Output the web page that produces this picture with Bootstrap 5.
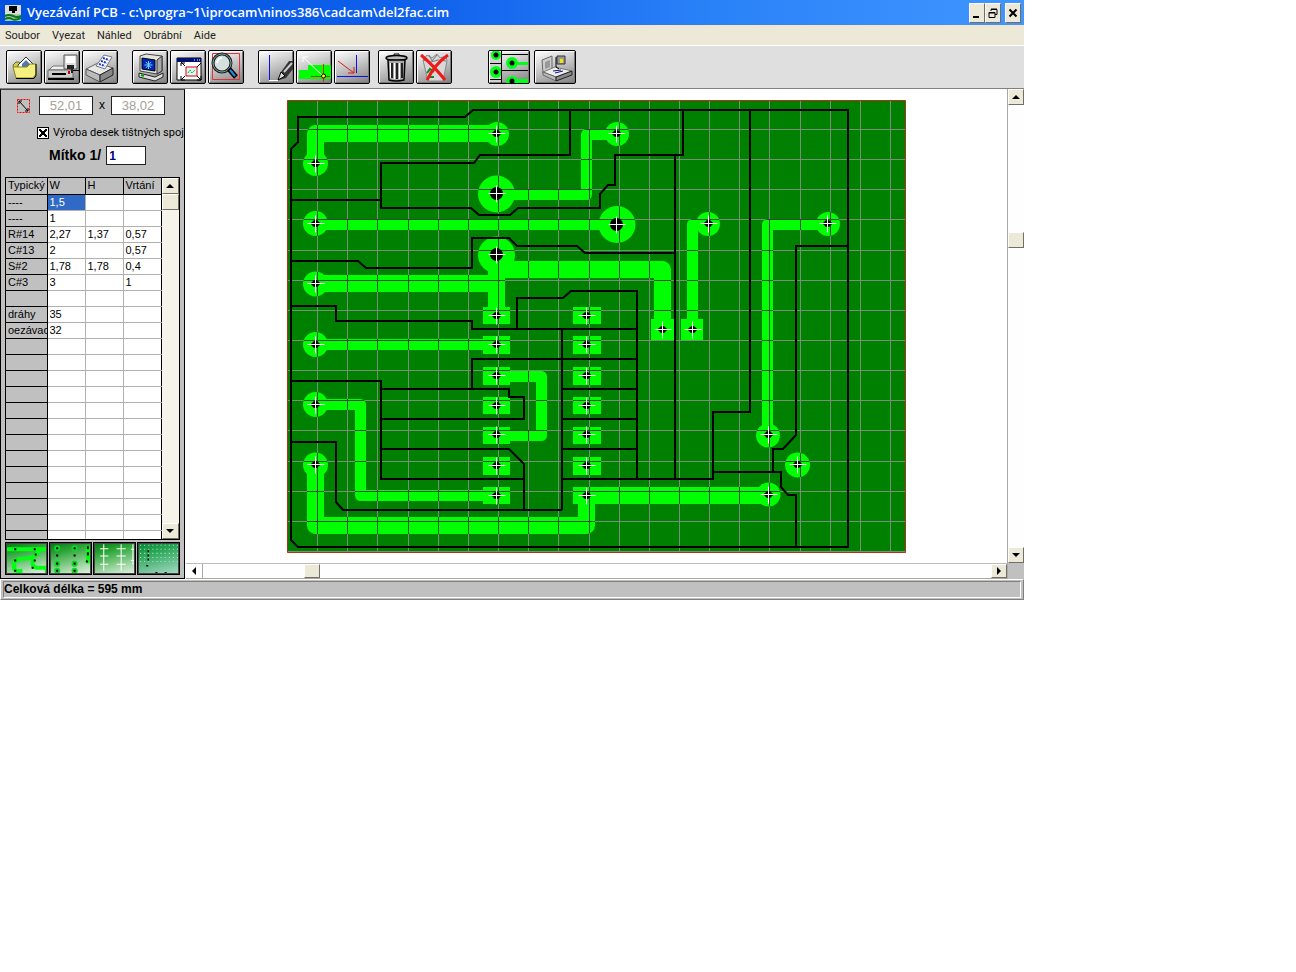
<!DOCTYPE html>
<html lang="cs">
<head>
<meta charset="utf-8">
<meta name="viewport" content="width=device-width, initial-scale=1">
<title>Vyezávání PCB</title>
<link href="https://cdn.jsdelivr.net/npm/bootstrap@5.3.0/dist/css/bootstrap.min.css" rel="stylesheet">
<style>
body{background:#fff;color:#000;font:11px/15px "Liberation Sans",Arial,sans-serif}
svg{display:block}
.app{max-width:1024px;background:#c0c0c0}
.titlebar{height:25px;background:linear-gradient(90deg,#0050e0,#0f60ec 40%,#2a82f8 70%,#4096ff);color:#fff;padding:0 3px 0 5px}
.titlebar h1{font:600 13px/25px "Open Sans","Noto Sans",sans-serif;margin:0;padding-left:2px}
.face{background:#ece9d8;border:1px solid;border-color:#fff #716f64 #716f64 #fff;border-radius:0;padding:0;color:#000;display:flex;align-items:center;justify-content:center;flex:none}
.winbtn{width:16px;height:20px}
.menubar{height:21px;background:linear-gradient(#f6e4cc,#ece9d8 4px);padding:0 5px;gap:12px;border-bottom:1px solid #fff}
.menubar a{color:#222;text-decoration:none;font:11px/21px Roboto,sans-serif}
.toolbar{background:#dfdfdf;padding:4px 6px;border-bottom:1px solid #808080;gap:14px}
.group{display:flex;gap:2px}
.group.near{margin-left:-6px}
.group.far{margin-left:22px;gap:4px}
.tool{width:36px;height:34px;padding:0;border:1px solid #000;border-radius:2px;background:linear-gradient(160deg,#fff,#c8c8c8 45%,#808080);box-shadow:inset 1px 1px #fff,inset -1px -1px #777;overflow:hidden}
.tool.wide{width:42px}
.tool svg,.thumbbtn svg{width:100%;height:100%}
.side{width:185px;flex:none;border:1px solid #000;padding:0 4px 3px;border-top-color:#444}
.sizerow{padding:6px 0 0 10px}
.tickrow{padding:10px 0 0 32px;gap:4px;white-space:nowrap}
.tickrow label{font-family:Roboto,sans-serif}
.scalerow{padding:6px 0 12px 44px;gap:5px}
.field{background:#fff;border:1px solid #000;border-color:#444 #fff #fff #444;outline:1px solid #222;outline-offset:-1px;border-radius:0;padding:0 4px}
.dim{width:54px;height:19px;text-align:center;font:13px/17px "Liberation Sans",sans-serif;color:#a5a295}
.times{width:18px;text-align:center;font-size:12px}
.scalebox{width:40px;height:19px;color:#000080;font:bold 12px/17px "Liberation Sans",sans-serif;padding:0 2px}
.scalelabel{font:bold 14px/19px "Liberation Sans",sans-serif}
.tick{appearance:none;width:12px;height:12px;margin:0;border:1px solid #000;background:#fff;background-image:linear-gradient(45deg,transparent 40%,#000 40%,#000 60%,transparent 60%),linear-gradient(-45deg,transparent 40%,#000 40%,#000 60%,transparent 60%);background-size:8px 8px;background-position:center;background-repeat:no-repeat}
.gridbox{border:1px solid #000;background:#fff}
.gridbox table{table-layout:fixed;border-collapse:collapse;width:155px;line-height:15px}
.gridbox col{width:38px}
.gridbox col:first-child{width:41px}
.gridbox th,.gridbox td{height:16px;padding:0 0 0 2px;font-weight:400;overflow:hidden;white-space:nowrap;border-right:1px solid #b0b0b0;border-bottom:1px solid #b0b0b0}
.gridbox th{background:#c0c0c0;border-color:#000}
.gridbox td:last-child{border-right-color:#000}
.gridbox tr.cut th,.gridbox tr.cut td{height:9px;border-bottom:0}
.gridbox td.picked{background:#316ac5;color:#fff}
.vbar{width:17px;flex:none;display:flex;flex-direction:column;background:#fefefe}
.dither{background:#f5f3ea}
.arrow{width:16px;height:16px}
.vbar .face{width:100%}
.hbar{height:16px;display:flex;border-top:1px solid #bbb;background:#fefefe;border-bottom:1px solid #aca899}
.hbar .arrow{height:14px}
.hbar .lead-gap{width:12.4%;border-left:1px solid #aaa}
.corner{height:16px;background:#c0c0c0}
.main-v{border-left:1px solid #aaa}
.main-v .lead-gap{height:26%}
.canvas{padding-left:1px}
.board{width:100%;max-width:619px;margin:11px auto 10px}
.thumbs{padding-top:2px;gap:1px}
.thumbbtn{flex:1;height:33px;padding:0;border:1px solid #000;outline:1px solid #444;outline-offset:-2px;background:linear-gradient(165deg,#007a10,#2ea83a 30%,#e8f4e8);overflow:hidden}
.status{height:21px;border:1px solid #808080;border-top-color:#fff;border-left-color:#fff;padding:1px 2px}
.status p{font:bold 12px/15px "Liberation Sans",sans-serif;margin:0;border:1px solid #808080;border-right-color:#fff;border-bottom-color:#fff;height:17px}
</style>
</head>
<body>
<div class="app">
  <header class="titlebar d-flex align-items-center">
    <svg width="16" height="16" viewBox="0 0 16 16" class="me-1"><path d="M0 0h16v16H0z" fill="#ddd"/><path d="M4 1h8v5H4zM7 6h3v2H7z"/><path d="M0 9h16v7H0z" fill="#a9c9a9"/><path d="M0 11q4-2 8 0t8 0M0 14q4-2 7 0t9-1" stroke="#087818" stroke-width="2" fill="none"/></svg>
    <h1 class="flex-grow-1 text-nowrap">Vyezávání PCB - c:\progra~1\iprocam\ninos386\cadcam\del2fac.cim</h1>
    <button class="face winbtn" aria-label="Minimalizovat"><svg width="14" height="16"><path d="M3 11h6v2H3z"/></svg></button>
    <button class="face winbtn" aria-label="Obnovit"><svg width="14" height="16" fill="none" stroke="#000"><path d="M5 6V4.500h6v5H9M5 4h6M3 7.500h6v5H3zM3 8h6"/></svg></button>
    <button class="face winbtn ms-1" aria-label="Zavřít"><svg width="14" height="16"><path d="M3.500 4.500l7 7m0-7l-7 7" stroke="#000" stroke-width="2"/></svg></button>
  </header>
  <nav class="menubar d-flex"><a href="#">Soubor</a><a href="#">Vyezat</a><a href="#">Náhled</a><a href="#">Obrábní</a><a href="#">Aide</a></nav>

  <div class="toolbar d-flex">
    <div class="group">
      <button class="tool" aria-label="Otevřít"><svg viewBox="0 0 34 32"><path d="M6 14l3-3h3l2 3h14v12H9z" fill="#d0d040" stroke="#666"/><path d="M11 14l8-8 8 8v6H11z" fill="#fff" stroke="#333"/><path d="M15 13l4-4 5 5v3h-9z" fill="#5878a8"/><path d="M6 16h14l3-3h6v10l-3 4H9z" fill="#f4f080" stroke="#888820"/><path d="M9 27.500h18l2-3V13" fill="none" stroke="#000"/></svg></button>
      <button class="tool" aria-label="Uložit"><svg viewBox="0 0 34 32"><path d="M4 19l4-4h14l6 4z" fill="#eee" stroke="#777"/><path d="M3 19h25v8H3z" fill="#ccc" stroke="#666"/><path d="M3 28h26M7 23h14" stroke="#000" stroke-width="2"/><path d="M19 4h13v14H19z" fill="#ddd" stroke="#555"/><path d="M21 5h9v7h-9z" fill="#fff"/><path d="M22 14h7v4h-7zM26 18h2v4h-2z" fill="#222"/><path d="M23 20h2v3h-2z" fill="#c00"/><path d="M28 19.500h6" stroke="#000"/></svg></button>
      <button class="tool" aria-label="Tisk"><svg viewBox="0 0 34 32"><path d="M3 18l12-6 15 5-13 7z" fill="#e8e8e8" stroke="#666"/><path d="M3 18l14 6v7L3 24z" fill="#bbb" stroke="#555"/><path d="M17 24l13-7v7l-13 7z" fill="#888" stroke="#222"/><path d="M13 15l8-11 8 2-7 12z" fill="#fff" stroke="#777"/><path d="M20 7l6 2m-8 1l6 2m-8 1l6 2" stroke="#1530d0" stroke-width="2" stroke-dasharray="2 1"/></svg></button>
    </div>
    <div class="group">
      <button class="tool" aria-label="Počítač"><svg viewBox="0 0 34 32"><path d="M7 5l6-2 16 2v15l-5 3-17-3z" fill="#e4e4dc" stroke="#444"/><path d="M9 7l13 2v11L9 18z" fill="#0028b8" stroke="#000"/><path d="M13 11l5 6m0-6l-5 6m2.500-7v8m-4-4h8" stroke="#70d0ff"/><path d="M24 9l5-4v15l-5 3z" fill="#aaa" stroke="#333"/><path d="M6 22l16 4 8-4v4l-8 4-16-4z" fill="#ddd" stroke="#222"/><path d="M8 24l3 1" stroke="#0a0" stroke-width="2"/></svg></button>
      <button class="tool" aria-label="Celé okno"><svg viewBox="0 0 34 32"><path d="M6 7h24v22H6z" fill="#fff" stroke="#000"/><path d="M6 7h24v4H6z" fill="#001070"/><path d="M23 9h1m2 0h1m1 0h1" stroke="#fff"/><path d="M15 16h11v9H15z" fill="#d7f8f0" stroke="#e00000"/><path d="M17 22l2-3 2 3 3-3" stroke="#0a9a50" stroke-dasharray="2 1" fill="none"/><path d="M14 15l-4-4m16 5l4-4M14 25l-4 4m16-4l4 4M10 15v-3h4M10 25v4h4m12 0h4v-4" stroke="#000" fill="none"/></svg></button>
      <button class="tool" aria-label="Lupa"><svg viewBox="0 0 34 32"><path d="M3.500 2.500h27v26h-27z" fill="none" stroke="#e03038"/><circle cx="13" cy="12" r="9" fill="#d4e0dc" stroke="#222" stroke-width="3"/><circle cx="13" cy="12" r="9" fill="none" stroke="#70a098"/><path d="M8 12q1-5 5-5" stroke="#fff" stroke-width="2" fill="none"/><path d="M20 18l7 8" stroke="#000" stroke-width="5"/><path d="M21 19l5 6" stroke="#1890e8" stroke-width="2"/></svg></button>
    </div>
    <div class="group">
      <button class="tool" aria-label="Kreslit"><svg viewBox="0 0 34 32"><path d="M10.500 4v25" stroke="#1010d8"/><path d="M10 29.500h9" stroke="#fff"/><path d="M20 29l2-8 8-11h4v8l-7 9z" fill="#333"/><path d="M19 29l3-8 4 4z" fill="#ddd" stroke="#000"/><path d="M25 21l8-9" stroke="#ccc" stroke-width="2"/></svg></button>
      <button class="tool" aria-label="Posunout"><svg viewBox="0 0 34 32"><path d="M2 19h9v-5h23v14H2z" fill="#00ff00"/><path d="M6 6l19 18M6 11V6h5" stroke="#fff" fill="none"/><path d="M14 25.500h19M26.500 13v18" stroke="#b04000"/><circle cx="26.500" cy="25" r="2" fill="#ff0" stroke="#000"/></svg></button>
      <button class="tool" aria-label="Kolmo"><svg viewBox="0 0 34 32"><path d="M2 25.500h31M21.500 4v18" stroke="#1010e0"/><path d="M3 10l16 12m0-6v6h-6" stroke="#e01818" fill="none"/></svg></button>
    </div>
    <div class="group near">
      <button class="tool" aria-label="Koš"><svg viewBox="0 0 34 32"><path d="M15 3h5v2h-5z" fill="#fff" stroke="#000"/><ellipse cx="17.500" cy="7" rx="10.500" ry="2.500" fill="#bbb" stroke="#000" stroke-width="1.500"/><path d="M9 9h17l-1 20q-8 2-15 0z" fill="#aaa" stroke="#000" stroke-width="1.500"/><path d="M13 12v15m5-15v16m5-16v15" stroke="#222" stroke-width="2"/><path d="M11.500 12v15m4-15v16m5-16v16" stroke="#fff"/></svg></button>
      <button class="tool" aria-label="Smazat"><svg viewBox="0 0 34 32"><path d="M6 9l4-5 5 3 5-4 3 4 6-2 1 5-4 20H11z" fill="#d8d8d8" stroke="#888"/><path d="M6 9l8 2 7-2 8 1M12 4l3 6 5-6" stroke="#777" fill="none"/><path d="M10 22l3-4 4 3m-6 5h6" stroke="#108820" stroke-width="2" fill="none"/><path d="M4 4q12 10 24 25M31 4Q18 13 10 29" stroke="#f01818" stroke-width="3" fill="none"/></svg></button>
    </div>
    <div class="group far">
      <button class="tool wide" aria-label="Deska"><svg viewBox="0 0 40 32" preserveAspectRatio="none"><path d="M1 1h12v30H1z" fill="#d0d0d0"/><g fill="#00ff18"><circle cx="7" cy="4" r="5"/><circle cx="7" cy="21" r="6"/><circle cx="23" cy="12" r="6"/><circle cx="23" cy="31" r="6"/><path d="M23 11h16v3H23zM23 28h16v4H23z"/></g><path d="M12.500 0v32M1 12.500h11M13 3.500h26M13 19.500h26M1 28.500h12" stroke="#000"/><circle cx="7" cy="4" r="2.500"/><circle cx="7" cy="21" r="2.500"/><circle cx="23" cy="12" r="2.500"/><circle cx="23" cy="30" r="2.500"/></svg></button>
      <button class="tool wide" aria-label="Fréza"><svg viewBox="0 0 40 32"><path d="M7 9l10-4v13l-9 4z" fill="#ccc" stroke="#666"/><path d="M10 11l5-2v7l-5 2z" fill="#999"/><path d="M8 21l12-5 17 4-16 6z" fill="#eee" stroke="#777"/><path d="M8 21l13 5v4L8 24z" fill="#bbb" stroke="#666"/><path d="M21 26l16-6v4l-16 6z" fill="#888" stroke="#222"/><path d="M22 5h8v8h-8z" fill="#999" stroke="#333"/><path d="M25 8h3v4h-3z" fill="#f0e800"/><path d="M21 6v10l3 2" stroke="#000" fill="none"/><path d="M18 20l8-1m-6 3l8-2" stroke="#101080"/></svg></button>
    </div>
  </div>

  <main class="d-flex">
    <aside class="side d-flex flex-column">
      <div class="sizerow d-flex align-items-center">
        <svg width="16" height="16" viewBox="0 0 16 16" class="me-1 flex-shrink-0"><path d="M2.500 1.500h12v13h-12z" fill="none" stroke="#ff0000" stroke-dasharray="2 1"/><path d="M4 3l9 10M4 6V3h3m6 7v3h-3" stroke="#000" fill="none"/></svg>
        <input class="field dim ms-1" value="52,01" disabled aria-label="Šířka"><span class="times">x</span><input class="field dim" value="38,02" disabled aria-label="Výška">
      </div>
      <div class="tickrow d-flex align-items-center">
        <input class="tick flex-shrink-0" type="checkbox" id="pcb" checked><label for="pcb">Výroba desek tištných spoj</label>
      </div>
      <div class="scalerow d-flex">
        <label class="scalelabel" for="scale">Mítko 1/</label><input class="field scalebox" id="scale" value="1">
      </div>
      <div class="gridbox d-flex">
        <table>
          <colgroup><col><col><col><col></colgroup>
          <thead><tr><th>Typický</th><th>W</th><th>H</th><th>Vrtání</th></tr></thead>
          <tbody>
            <tr><th>----</th><td class="picked">1,5</td><td></td><td></td></tr>
            <tr><th>----</th><td>1</td><td></td><td></td></tr>
            <tr><th>R#14</th><td>2,27</td><td>1,37</td><td>0,57</td></tr>
            <tr><th>C#13</th><td>2</td><td></td><td>0,57</td></tr>
            <tr><th>S#2</th><td>1,78</td><td>1,78</td><td>0,4</td></tr>
            <tr><th>C#3</th><td>3</td><td></td><td>1</td></tr>
            <tr><th></th><td></td><td></td><td></td></tr>
            <tr><th>dráhy</th><td>35</td><td></td><td></td></tr>
            <tr><th>oezávac</th><td>32</td><td></td><td></td></tr>
            <tr><th></th><td></td><td></td><td></td></tr><tr><th></th><td></td><td></td><td></td></tr><tr><th></th><td></td><td></td><td></td></tr><tr><th></th><td></td><td></td><td></td></tr><tr><th></th><td></td><td></td><td></td></tr><tr><th></th><td></td><td></td><td></td></tr><tr><th></th><td></td><td></td><td></td></tr><tr><th></th><td></td><td></td><td></td></tr><tr><th></th><td></td><td></td><td></td></tr><tr><th></th><td></td><td></td><td></td></tr><tr><th></th><td></td><td></td><td></td></tr><tr><th></th><td></td><td></td><td></td></tr>
            <tr class="cut"><th></th><td></td><td></td><td></td></tr>
          </tbody>
        </table>
        <div class="vbar dither flex-grow-1">
          <button class="face arrow" aria-label="Nahoru"><svg width="8" height="4"><path d="M0 4l4-4 4 4z"/></svg></button>
          <div class="face arrow"></div>
          <div class="flex-grow-1"></div>
          <button class="face arrow" aria-label="Dolů"><svg width="8" height="4"><path d="M0 0l4 4 4-4z"/></svg></button>
        </div>
      </div>
      <div class="thumbs d-flex">
        <button class="thumbbtn" aria-label="Dráhy"><svg viewBox="0 0 40 30"><path d="M0 6h40M33 6q-3 8-12 9-11 0-13 4v6q0 3 8 2M27 16q-4 8 6 8h7v6" stroke="#00ff10" stroke-width="4" fill="none"/><path d="M8 6h2m17 0h2M8 17h2m17 0h2M8 27h2m15-3h2m1-13h2" stroke="#000" stroke-width="2"/></svg></button>
        <button class="thumbbtn" aria-label="Otvory"><svg viewBox="0 0 40 30"><path d="M37 4v14" stroke="#00ff10" stroke-width="4" stroke-linecap="round"/><g fill="#10d828"><circle cx="7" cy="5" r="3"/><circle cx="24" cy="5" r="3"/><circle cx="7" cy="20" r="3"/><circle cx="24" cy="20" r="3"/><circle cx="7" cy="27" r="3"/><circle cx="24" cy="27" r="3"/></g><path d="M6 5h2m15 0h2M6 12h2m15 0h2M6 20h2m15 0h2M6 27h2m15 0h2M35 18h2M37 3v3m0 3v3" stroke="#000" stroke-width="2"/></svg></button>
        <button class="thumbbtn" aria-label="Kříže"><svg viewBox="0 0 40 30"><path d="M9.500 1v26M26.500 1v26M38 1v20M6 5.500h8M6 12.500h8M6 20.500h8M22 5.500h9m-9 7h9m-9 8h9M36 6h4m-4 11h4" stroke="#fff"/></svg></button>
        <button class="thumbbtn" aria-label="Vrtání"><svg viewBox="0 0 40 30"><path d="M0 0h40v30H0z" fill="#18a088" opacity=".3"/><path d="M2 2h37M2 6h37M2 10h37M2 14h37M2 18h37" stroke="#a8e8e0" stroke-dasharray="1 3"/><path d="M10 7v12M8 22h2m7 7h2m7 0h2" stroke="#000" stroke-dasharray="2 2" stroke-width="1.500"/></svg></button>
      </div>
    </aside>

    <section class="canvas flex-grow-1 d-flex flex-column bg-white">
      <svg class="board" viewBox="287 100 619 453" role="img" aria-label="Deska plošných spojů">
        <defs>
          <g id="copper" fill="none" stroke="currentColor" stroke-linejoin="round">
            <g stroke-width="17"><path d="M315.500 164V133.500H497M316 283.500H497M496.500 255V315M496.500 269.500H662.500V325M315.500 465V525.500H586.500V495.500H768"/></g>
            <g stroke-width="11"><path d="M497 194.500H586.500V134.500H617M316 224.500H617M708 224.500H692.500V325M828 224.500H767.500V435M316 344.500H497M497 376.500H541.500V435.500H497M316 404.500H360.500V495.500H497"/></g>
            <g stroke="none" fill="currentColor">
              <circle cx="315.500" cy="163.500" r="12.500"/><circle cx="497" cy="134" r="12"/><circle cx="617" cy="134" r="12"/><circle cx="496.500" cy="194" r="18.500"/><circle cx="315.500" cy="223.500" r="12.500"/><circle cx="617" cy="224.500" r="18.500"/><circle cx="496.500" cy="255" r="18.500"/><circle cx="315.500" cy="284" r="12.500"/><circle cx="315.500" cy="344.500" r="12.500"/><circle cx="315.500" cy="404.500" r="12.500"/><circle cx="315.500" cy="465" r="12.500"/><circle cx="708" cy="224" r="12"/><circle cx="828" cy="224" r="12"/><circle cx="768" cy="435.500" r="12"/><circle cx="797.500" cy="465" r="12.500"/><circle cx="768.500" cy="494.500" r="12"/>
              <path d="M483 307h27v17h-27zM483 336h27v18h-27zM483 367h27v18h-27zM483 397h27v17h-27zM483 427h27v17h-27zM483 457h27v18h-27zM483 487h27v17h-27zM573 307h28v17h-28zM573 336h28v18h-28zM573 367h28v18h-28zM573 397h28v17h-28zM573 427h28v17h-28zM573 457h28v18h-28zM573 487h28v17h-28zM651 319h23v21h-23zM681 319h22v21h-22z"/>
            </g>
          </g>
          <path id="mesh" d="M317.500 101v451M347.500 101v451M377.500 101v451M408.500 101v451M438.500 101v451M468.500 101v451M498.500 101v451M528.500 101v451M558.500 101v451M589.500 101v451M619.500 101v451M649.500 101v451M679.500 101v451M709.500 101v451M739.500 101v451M769.500 101v451M800.500 101v451M830.500 101v451M860.500 101v451M890.500 101v451M288 129.500h617M288 159.500h617M288 189.500h617M288 219.500h617M288 250.500h617M288 280.500h617M288 310.500h617M288 340.500h617M288 370.500h617M288 400.500h617M288 430.500h617M288 461.500h617M288 491.500h617M288 521.500h617M288 551.500h617"/>
          <mask id="on" maskUnits="userSpaceOnUse" x="287" y="100" width="619" height="453"><use href="#copper" color="#fff"/></mask>
          <g id="s"><circle r="3.500"/><path d="M-8 0H9M0-8V9" stroke="#fff"/><path d="M-4 1h3M1 1h3M-4-1h3M1-1h3" stroke="#000"/></g>
          <g id="b"><circle r="6.500"/><path d="M-8 0H9M0-8V9" stroke="#fff"/></g>
        </defs>
        <path d="M287.500 100.500h618v452h-618z" fill="#008000" stroke="#b03018"/>
        <use href="#mesh" stroke="#789078"/>
        <use href="#copper" color="#00ff00"/>
        <g mask="url(#on)"><use href="#mesh" stroke="#384838"/></g>
        <path fill="none" stroke="#000" stroke-width="2" d="M291 149L298 142V117H465L473 110H848V547H298L291 540ZM291 200H381M570 110V155H480L474 163H381V208H471L479 215H510L518 208H600V194L608 185H615V155H683V110M675 155V479M291 261H358L366 268H472V238H509L517 246H577L585 253H675M291 306H336V321H472V329H637M517 329V298H563L571 291H637V479M562 329V510M472 389V359H637M381 389H509V397H524V419H381M562 389H637M562 419H637M562 449H637M562 479H713V412H750V110M291 381H381V479H524M381 449H509L524 464V510M291 442H336V502L343 510H562M713 472H781V487L788 495H796V547M773 472V449H783L796 435V246H848"/>
        <use href="#s" x="315.500" y="163.500"/><use href="#s" x="496.500" y="133.500"/><use href="#s" x="616.500" y="133.500"/><use href="#b" x="496.500" y="193.500"/><use href="#s" x="315.500" y="223.500"/><use href="#b" x="616.500" y="224.500"/><use href="#b" x="496.500" y="254.500"/><use href="#s" x="315.500" y="283.500"/><use href="#s" x="315.500" y="344.500"/><use href="#s" x="315.500" y="404.500"/><use href="#s" x="315.500" y="464.500"/><use href="#s" x="708.500" y="223.500"/><use href="#s" x="827.500" y="223.500"/><use href="#s" x="768.500" y="434.500"/><use href="#s" x="797.500" y="464.500"/><use href="#s" x="768.500" y="494.500"/>
        <use href="#s" x="496.500" y="315.500"/><use href="#s" x="496.500" y="344.500"/><use href="#s" x="496.500" y="375.500"/><use href="#s" x="496.500" y="405.500"/><use href="#s" x="496.500" y="434.500"/><use href="#s" x="496.500" y="465.500"/><use href="#s" x="496.500" y="495.500"/>
        <use href="#s" x="586.500" y="315.500"/><use href="#s" x="586.500" y="344.500"/><use href="#s" x="586.500" y="375.500"/><use href="#s" x="586.500" y="405.500"/><use href="#s" x="586.500" y="434.500"/><use href="#s" x="586.500" y="465.500"/><use href="#s" x="586.500" y="495.500"/><use href="#s" x="662.500" y="329.500"/><use href="#s" x="692.500" y="329.500"/>
      </svg>
      <div class="hbar mt-auto">
        <button class="border-0 bg-white p-0 arrow d-flex align-items-center justify-content-center" aria-label="Vlevo"><svg width="4" height="8"><path d="M4 0L0 4l4 4z"/></svg></button>
        <div class="lead-gap"></div><div class="face arrow"></div><div class="flex-grow-1"></div>
        <button class="face arrow" aria-label="Vpravo"><svg width="4" height="8"><path d="M0 0l4 4-4 4z"/></svg></button>
      </div>
    </section>
    <div class="vbar main-v">
      <button class="face arrow" aria-label="Nahoru"><svg width="8" height="4"><path d="M0 4l4-4 4 4z"/></svg></button>
      <div class="lead-gap"></div>
      <div class="face arrow"></div><div class="flex-grow-1"></div>
      <button class="face arrow" aria-label="Dolů"><svg width="8" height="4"><path d="M0 0l4 4 4-4z"/></svg></button>
      <div class="corner"></div>
    </div>
  </main>
  <footer class="status"><p>Celková délka = 595 mm</p></footer>
</div>
<script src="https://cdn.jsdelivr.net/npm/bootstrap@5.3.0/dist/js/bootstrap.bundle.min.js"></script>
</body>
</html>
